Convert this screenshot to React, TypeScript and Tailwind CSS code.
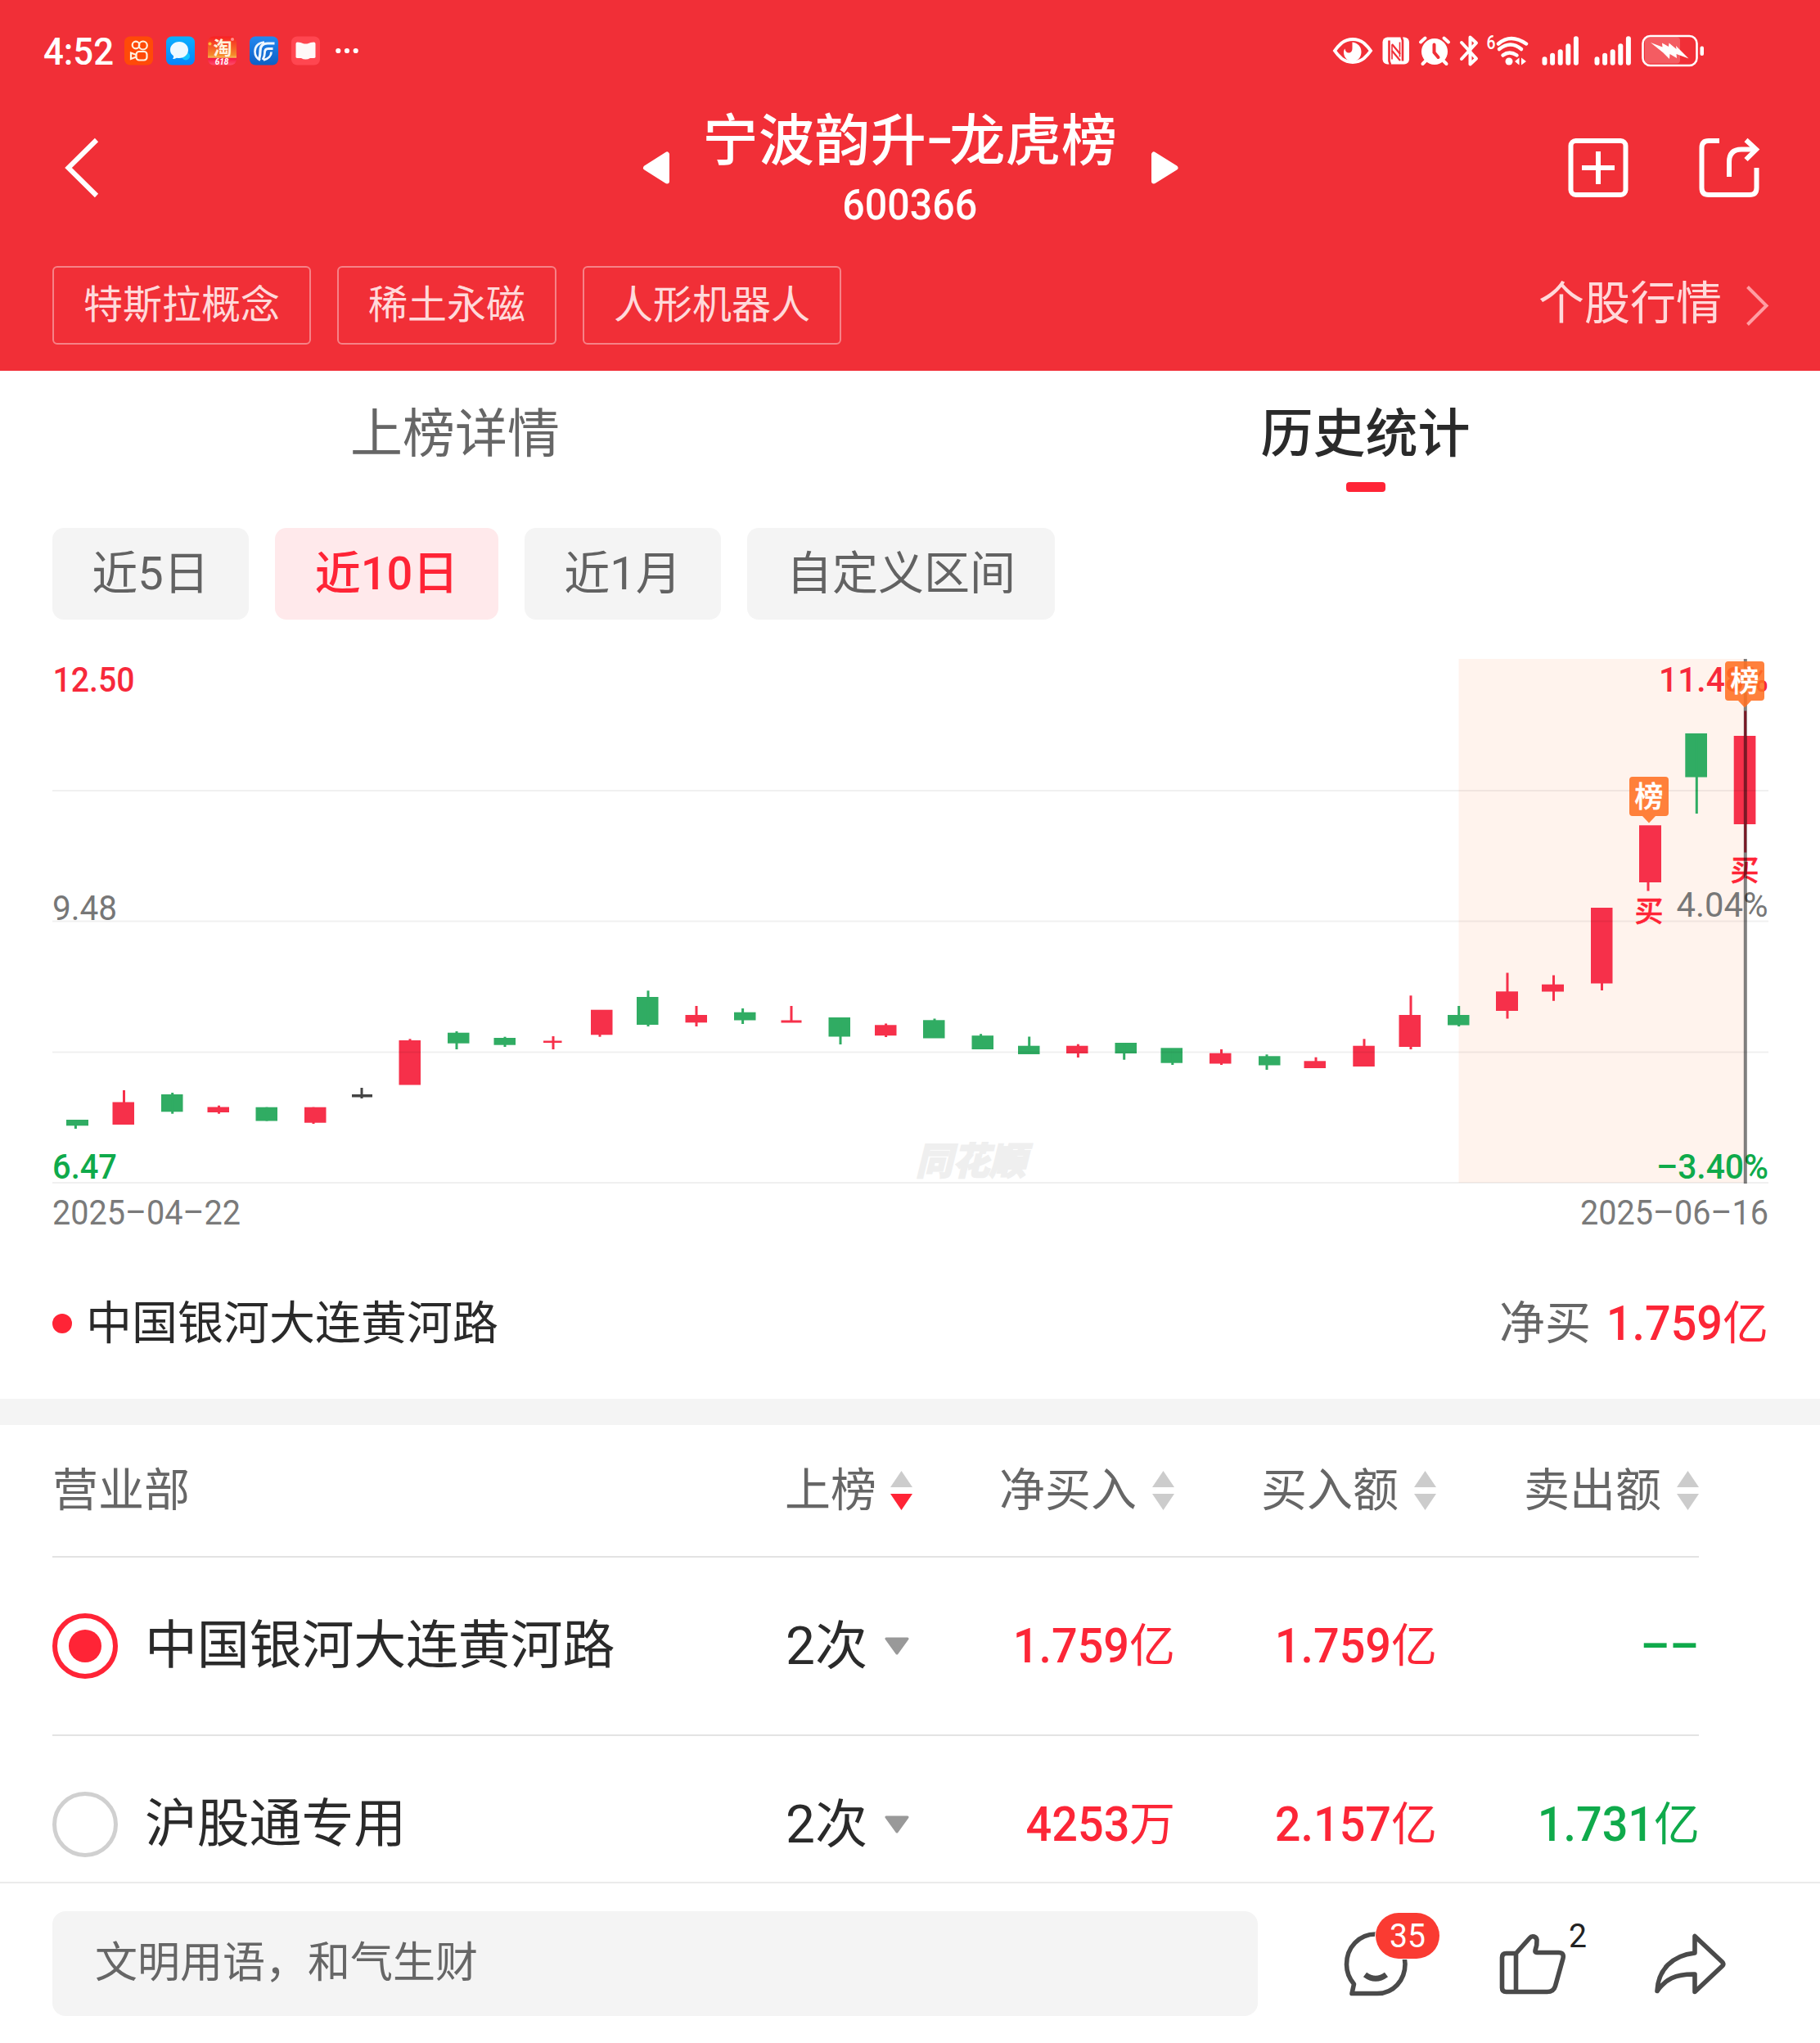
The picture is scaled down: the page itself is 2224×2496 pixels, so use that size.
import React from 'react';

const RED = '#f6304a';
const GREEN = '#30ac63';
const DARK = '#444444';

type Candle = {
  color: string;
  x: number;
  w: number;
  top: number;
  bottom: number;
  wick: number;
  high: number;
  low: number;
};

const c = (color: string, x: number, w: number, top: number, bottom: number, wick: number, high: number, low: number): Candle => ({
  color, x, w, top, bottom, wick, high, low,
});

const candles: Candle[] = [
  c(GREEN, 81, 27, 1368, 1375.3, 92.4, 1368, 1379),
  c(RED, 137.5, 26.5, 1346.5, 1374, 151.5, 1332, 1374),
  c(GREEN, 197, 26.5, 1337, 1358.3, 210.7, 1335, 1360.7),
  c(RED, 253.5, 26.5, 1352.5, 1359, 267.5, 1350.7, 1360.7),
  c(GREEN, 312.5, 26.5, 1352.7, 1369.5, 326, 1352.7, 1369.5),
  c(RED, 372, 26.5, 1352.7, 1371.7, 383, 1352.7, 1373),
  c(DARK, 430, 25, 1337, 1340.5, 442, 1329, 1342),
  c(RED, 487.5, 26.5, 1271, 1325.5, 501, 1269.3, 1325),
  c(GREEN, 547, 26.5, 1261.7, 1274.7, 558, 1260, 1282),
  c(GREEN, 603.5, 26.5, 1268, 1276.7, 617, 1266.7, 1279),
  c(RED, 664, 22.5, 1271.5, 1274, 676, 1266, 1282),
  c(RED, 722, 26.5, 1233.7, 1264.3, 733, 1234, 1266.7),
  c(GREEN, 778, 26.5, 1218, 1252, 792, 1210.3, 1254),
  c(RED, 837.5, 26.5, 1240, 1249.3, 851, 1229, 1254),
  c(GREEN, 897, 26.5, 1236.7, 1246.5, 907.6, 1232, 1251),
  c(RED, 954.5, 25, 1246.5, 1249.5, 967, 1229, 1249),
  c(GREEN, 1012.5, 26.5, 1243, 1266.5, 1027, 1243, 1276),
  c(RED, 1069, 26.5, 1252.3, 1265.2, 1082.6, 1250.5, 1267),
  c(GREEN, 1128, 26.5, 1246.3, 1268.5, 1142, 1244.5, 1268),
  c(GREEN, 1187.5, 26.5, 1265.2, 1282, 1198.6, 1263.2, 1282),
  c(GREEN, 1244, 26.5, 1277.7, 1288, 1257.7, 1266.5, 1288),
  c(RED, 1303, 26.5, 1277.7, 1287, 1317.4, 1275.7, 1292),
  c(GREEN, 1362.5, 26.5, 1274, 1287, 1373.7, 1274, 1294.7),
  c(GREEN, 1418.5, 26.5, 1280.3, 1298.7, 1432.8, 1281, 1301),
  c(RED, 1478, 26.5, 1286.7, 1299.5, 1492.5, 1282, 1301),
  c(GREEN, 1538, 26.5, 1290.3, 1301.5, 1548, 1288.3, 1307),
  c(RED, 1593.5, 26.5, 1296.3, 1305, 1608, 1291.7, 1305),
  c(RED, 1653.3, 26.5, 1277.7, 1303, 1667, 1269.3, 1303),
  c(RED, 1709.5, 26.5, 1240, 1279, 1724, 1216.3, 1282),
  c(GREEN, 1769, 26.5, 1240, 1252.5, 1782.7, 1229, 1254),
  c(RED, 1828, 27, 1211.3, 1235, 1842, 1188.5, 1244.5),
  c(RED, 1884, 27, 1202.7, 1211.5, 1898.5, 1191.5, 1222.8),
  c(RED, 1944, 26.5, 1109, 1201.5, 1957.5, 1110, 1210),
  c(RED, 2003, 27, 1008.3, 1078, 2014, 1010, 1088.5),
  c(GREEN, 2059.3, 26.7, 896, 949.5, 2073.3, 897, 994),
  c(RED, 2118.7, 26.7, 899, 1007, 2132.7, 868.5, 1041.5),
];

const gridLines = [966, 1125.5, 1285.5, 1445];

function ListBadge({ x, y }: { x: number; y: number }) {
  return (
    <g>
      <path
        d={`M${x + 4} ${y}h40a4 4 0 0 1 4 4v40a4 4 0 0 1 -4 4h-12l-8 8.5l-8 -8.5h-12a4 4 0 0 1 -4 -4v-40a4 4 0 0 1 4 -4z`}
        fill="#ff6f22"
        fillOpacity="0.88"
      />
      <text x={x + 24} y={y + 36.5} textAnchor="middle" fontSize="35" fontWeight="500" fill="#fff" stroke="#fff" strokeWidth="0.5">榜</text>
    </g>
  );
}

function Chart() {
  return (
    <svg
      className="block h-[752px] w-full [font-family:Roboto,'Noto_Sans_CJK_SC',sans-serif]"
      viewBox="0 789 2224 752"
    >
      <rect x="1782.5" y="805" width="349" height="640" fill="#fff3ed" />
      <text
        x="1119"
        y="1435"
        fontSize="46"
        fontWeight="900"
        fill="#efefef"
        stroke="#efefef"
        strokeWidth="1.5"
        fontStyle="italic"
        textLength="135"
        lengthAdjust="spacingAndGlyphs"
      >
        同花顺
      </text>
      {candles.map((k) => (
        <g key={k.x} fill={k.color}>
          <rect x={k.x} y={k.top} width={k.w} height={k.bottom - k.top} />
          <rect x={k.wick - 1.5} y={k.high} width="3" height={k.low - k.high} />
        </g>
      ))}
      {gridLines.map((y) => (
        <rect key={y} x="64" y={y - 1} width="2097" height="2" fill="#000" fillOpacity="0.06" />
      ))}
      <g fontSize="43" fontWeight="500">
        <text x="64.5" y="844.5" fill="#f7293b" textLength="100" lengthAdjust="spacingAndGlyphs">12.50</text>
        <text x="64" y="1124" fill="#777" fontWeight="400" textLength="79" lengthAdjust="spacingAndGlyphs">9.48</text>
        <text x="64" y="1440" fill="#0faa4b" textLength="79" lengthAdjust="spacingAndGlyphs">6.47</text>
        <text x="2027" y="844.5" fill="#f7293b" textLength="134" lengthAdjust="spacingAndGlyphs">11.48%</text>
        <text x="2048.5" y="1120" fill="#777" fontWeight="400" textLength="112" lengthAdjust="spacingAndGlyphs">4.04%</text>
        <text x="2024" y="1440" fill="#0faa4b" textLength="137" lengthAdjust="spacingAndGlyphs">–3.40%</text>
        <text x="64" y="1496" fill="#7a7a7a" fontWeight="400" textLength="230" lengthAdjust="spacingAndGlyphs">2025–04–22</text>
        <text x="1931" y="1496" fill="#7a7a7a" fontWeight="400" textLength="230" lengthAdjust="spacingAndGlyphs">2025–06–16</text>
      </g>
      <g fontSize="35" fontWeight="500" fill="#ff2436" stroke="#ff2436" strokeWidth="0.5" textAnchor="middle">
        <text x="2015" y="1125.5">买</text>
        <text x="2132" y="1075.5">买</text>
      </g>
      <rect x="2130.8" y="805" width="4" height="641" fill="#000" fillOpacity="0.5" />
      <ListBadge x={1991} y={949} />
      <ListBadge x={2108} y={808} />
    </svg>
  );
}

function StatusLeft() {
  return (
    <div className="flex items-center">
      <span className="w-[99px] pt-0.5 text-[47px] leading-none font-medium">
        <span className="inline-block origin-left scale-x-[0.93] whitespace-nowrap">4:52</span>
      </span>
      <svg className="h-[36px] w-[290px]" viewBox="152 43.5 290 36">
        <defs>
          <linearGradient id="blueA" x1="0" y1="0" x2="0" y2="1"><stop offset="0" stopColor="#0bb0ff" /><stop offset="1" stopColor="#0584fb" /></linearGradient>
          <linearGradient id="blueB" x1="0" y1="0" x2="0" y2="1"><stop offset="0" stopColor="#2388f0" /><stop offset="1" stopColor="#0e5fc4" /></linearGradient>
          <linearGradient id="warm" x1="0" y1="0" x2="0" y2="1"><stop offset="0" stopColor="#f81f23" /><stop offset="0.65" stopColor="#f58a2a" /><stop offset="0.74" stopColor="#f9b757" /><stop offset="0.75" stopColor="#f5153f" /><stop offset="1" stopColor="#ff4d6d" /></linearGradient>
        </defs>
        <rect x="152" y="44" width="35" height="35" rx="7" fill="#ff4a08" />
        <g fill="none" stroke="#fff0e0" strokeWidth="2.2">
          <circle cx="166" cy="54.5" r="4.3" />
          <circle cx="174.8" cy="55" r="5" />
          <rect x="166.5" y="62.5" width="13" height="10.5" rx="3.5" />
          <path d="M166.500 66.500l-6.500 -2.500v7.500l6.500 -2.500" />
        </g>
        <rect x="203" y="44" width="35" height="35" rx="7" fill="url(#blueA)" />
        <circle cx="227" cy="68" r="5" fill="#15c4ff" />
        <path d="M219 50.500c6.500 0 11 4.500 11 10s-4.500 10 -11 10c-1 0 -2 0 -3 -.3c-1.500 .9 -3 1.200 -5 1.200c1 -1.200 1.300 -2.500 1 -3.600c-2.500 -1.700 -4 -4.300 -4 -7.300c0 -5.500 4.500 -10 11 -10z" fill="#eef9ff" />
        <rect x="254" y="44" width="35" height="35" rx="7" fill="url(#warm)" />
        <circle cx="256.500" cy="53" r="2" fill="#ffb53a" /><circle cx="284" cy="47.500" r="2" fill="#ff8f8f" />
        <text x="272" y="66" fontSize="23" fontWeight="700" textAnchor="middle" fill="#fff2dc">淘</text>
        <text x="271" y="78" fontSize="10" fontWeight="700" fontStyle="italic" textAnchor="middle" fill="#fff">618</text>
        <rect x="305" y="44" width="35" height="35" rx="7" fill="url(#blueB)" />
        <g fill="none" stroke="#eef6ff">
          <path d="M323 51c-7 .5 -11.500 5 -11.500 11.500c0 5 2.500 8.500 6.500 10.500" strokeWidth="2.600" />
          <path d="M335.500 52.500h-8.500c-6 0 -9 3 -9 9.500c0 4 -.5 7 -1.500 10" strokeWidth="3.200" />
          <path d="M333.500 59h-6c-3 0 -4 1.500 -4 5s-1 6 -2.500 8.500M331.500 63c0 4.500 -3.500 8.500 -9.500 9.800" strokeWidth="2.800" />
        </g>
        <rect x="356" y="44" width="35" height="35" rx="7" fill="#ff4650" />
        <path d="M363.500 51c3 0 5 .8 6.500 1.500q3.500 1 7 0c1.500 -.7 3.500 -1.500 6.500 -1.500q2 0 2 2v16.500q-.5 1 -2 1h-4.500q-2.500 1.500 -5.500 1.500t-5.500 -1.500h-4.500q-1.500 0 -2 -1v-16.500q0 -2 2 -2z" fill="#fff8f8" />
        <circle cx="413.300" cy="61.500" r="3.100" fill="#fff" />
        <circle cx="424" cy="61.500" r="3.100" fill="#fff" />
        <circle cx="434.700" cy="61.500" r="3.100" fill="#fff" />
      </svg>
    </div>
  );
}

function Signal({ x }: { x: number }) {
  return (
    <g fill="#fff">
      {[10.500, 15, 19.500, 26.500, 35.500].map((h, i) => (
        <rect key={h} x={x + i * 9.600} y={79.300 - h} width="6" height={h} rx="3" />
      ))}
    </g>
  );
}

function StatusRight() {
  return (
    <svg className="h-[44px] w-[456px]" viewBox="1628 39.500 456 44">
      <path d="M1631 61.500q3 -4.500 8.500 -9.500q6 -4.500 13.500 -4.500t13.500 4.500q5.500 5 8.500 9.500q-3 4.500 -8.500 9.500q-6 4.500 -13.500 4.500t-13.500 -4.500q-5.500 -5 -8.500 -9.500z" fill="none" stroke="#fff" strokeWidth="4" />
      <path d="M1652.500 51c6.500 1 11 5 11 12c0 6.500 -4.500 11.500 -10.500 11.500s-11 -4.500 -11 -11c0 -2 .5 -3.500 1.500 -4.500c.5 3.500 2 5 4.500 5c3.500 0 4.500 -2.500 4.500 -6c0 -2.500 0 -4.500 0 -7z" fill="#fff" />
      <rect x="1689.500" y="45" width="32.500" height="33" rx="6" fill="#fff" />
      <path d="M1699 78.500L1697.500 74V49" fill="none" stroke="#f02f37" strokeWidth="2.600" />
      <path d="M1712.500 44.500L1714 49V74" fill="none" stroke="#f02f37" strokeWidth="2.600" />
      <path d="M1701 54V72M1710.500 51V69" fill="none" stroke="#f02f37" strokeWidth="1.600" />
      <path d="M1701 53.500L1711 65.500M1701 61.500L1711 73.500" fill="none" stroke="#f02f37" strokeWidth="2.200" />
      <circle cx="1753" cy="62.500" r="16" fill="#fff" />
      <path d="M1736 51l5.500 -5M1770 51l-5.500 -5M1742 74l-3.500 3.500M1764 74l3.500 3.500" stroke="#fff" strokeWidth="4" strokeLinecap="round" />
      <path d="M1752.500 54v9.500l5 6" fill="none" stroke="#f02f37" strokeWidth="4" strokeLinecap="round" />
      <path d="M1786 51.500l18 19.500l-7.500 7v-33l7.500 7l-18 19.500" fill="none" stroke="#fff" strokeWidth="4" strokeLinejoin="round" strokeLinecap="round" />
      <text x="1816.500" y="59.500" fontSize="24" fontWeight="500" fill="#fff" textLength="11" lengthAdjust="spacingAndGlyphs">6</text>
      <g fill="none" stroke="#fff" strokeWidth="4.500" strokeLinecap="round">
        <path d="M1831 53q15 -13 34 0" />
        <path d="M1832 59.500q14 -11 27 0" />
        <path d="M1836.500 67q8 -6 17 0" />
      </g>
      <circle cx="1844" cy="74.500" r="4.500" fill="#fff" />
      <path d="M1856.500 70v9l-5.500 -4.500zM1859 70v9l6 -4.500z" fill="#fff" />
      <Signal x={1884.500} />
      <Signal x={1948.500} />
      <rect x="2010" y="45" width="43" height="32" rx="4" fill="#fff" fillOpacity="0.22" />
      <rect x="2007.500" y="43.500" width="66" height="36" rx="9" fill="none" stroke="#fff" strokeWidth="2.600" />
      <rect x="2077.500" y="56" width="4.500" height="11.500" rx="2" fill="#fff" />
      <path d="M2017 51.500l14.500 5.500l-.5 -5l8 4.500l.5 -4.500l9 7.500l-.5 -4l15.500 15.500l-15 -5.500l.5 5l-8.500 -5l-.5 6l-7.500 -7.500z" fill="#fff" />
    </svg>
  );
}

const tags = ['特斯拉概念', '稀土永磁', '人形机器人'];

function Header() {
  return (
    <header className="h-[453px] bg-[#f12f37] text-white">
      <div className="flex h-[123px] items-center justify-between pr-[140px] pl-[53px]">
        <StatusLeft />
        <StatusRight />
      </div>
      <div className="grid h-[164px] grid-cols-[1fr_auto_1fr] items-center">
        <svg className="ml-[76px] h-[80px] w-[50px]" viewBox="76 165 50 80">
          <path d="M118 171L83.500 205L118 239" fill="none" stroke="#fff" strokeWidth="6" />
        </svg>
        <div className="flex items-center">
          <svg className="h-[42px] w-[34px]" viewBox="784 184 34 42">
            <path d="M789 205L815 188.500V221.500z" fill="#fff" stroke="#fff" strokeWidth="6" strokeLinejoin="round" />
          </svg>
          <div className="flex w-[588px] flex-col items-center gap-[10px] pt-[5px]">
            <h1 className="text-[68px] leading-[76px] font-medium tracking-[0.4px] whitespace-nowrap">
              宁波韵升<span className="inline-block w-[28px] scale-x-75 text-center"><span className="-ml-[5px]">–</span></span>龙虎榜
            </h1>
            <span className="inline-block scale-x-[0.93] text-[52px] leading-[60px] font-medium">600366</span>
          </div>
          <svg className="h-[42px] w-[34px]" viewBox="1406 184 34 42">
            <path d="M1436.500 205L1410 188.500V221.500z" fill="#fff" stroke="#fff" strokeWidth="6" strokeLinejoin="round" />
          </svg>
        </div>
        <div className="flex justify-end gap-[84px] pr-[72px]">
          <svg className="h-[76px] w-[76px]" viewBox="1915 167 76 76">
            <rect x="1919.500" y="172" width="67" height="66" rx="6" fill="none" stroke="#fff" strokeWidth="6" />
            <path d="M1953 185v40M1933 205h40" stroke="#fff" strokeWidth="6" />
          </svg>
          <svg className="h-[76px] w-[77px]" viewBox="2075 167 77 76">
            <path d="M2101 172h-13q-8.500 0 -8.500 8.500v49q0 8.500 8.500 8.500h50q8.500 0 8.500 -8.500v-24.500" fill="none" stroke="#fff" strokeWidth="6" />
            <path d="M2113 216v-18q0 -15.500 15 -15.500h18" fill="none" stroke="#fff" strokeWidth="6" />
            <path d="M2133.500 171l12.500 11.500l-12.500 12.500" fill="none" stroke="#fff" strokeWidth="6" />
          </svg>
        </div>
      </div>
      <div className="mt-[38px] flex items-center justify-between pr-[60px] pl-[64px]">
        <div className="flex gap-8">
          {tags.map((t) => (
            <span key={t} className="flex h-[96px] items-center rounded-md border-2 border-white/40 px-9 pb-px text-[48px] text-[#ffd9da]">{t}</span>
          ))}
        </div>
        <div className="flex items-center gap-[28px] text-[56px] leading-none text-[#ffd9da]">
          <span className="-mt-1">个股行情</span>
          <svg className="h-[52px] w-[32px]" viewBox="2132 347 32 52">
            <path d="M2135.500 350.500L2158.500 373.500L2135.500 396.500" fill="none" stroke="#ff9ea3" strokeWidth="4" />
          </svg>
        </div>
      </div>
    </header>
  );
}

function Tabs() {
  return (
    <nav className="grid h-[192px] grid-cols-2 pt-[38px] text-center text-[64px] leading-[80px]">
      <div className="text-[#666]">上榜详情</div>
      <div className="flex flex-col items-center pl-px font-medium text-[#2a2a2a]">
        历史统计
        <span className="mt-[18px] h-3 w-12 rounded bg-[#ff2436]" />
      </div>
    </nav>
  );
}

const ranges = [
  { label: '近5日', width: 'w-[240px]' },
  { label: '近10日', width: 'w-[273px]', on: true },
  { label: '近1月', width: 'w-[240px]' },
  { label: '自定义区间', width: 'w-[376px]' },
];

function Ranges() {
  return (
    <div className="mb-8 flex h-[112px] gap-8 px-16 text-[56px]">
      {ranges.map((r) => (
        <button
          key={r.label}
          className={`${r.width} flex items-center justify-center rounded-[14px] ${
            r.on ? 'bg-[#ffe9eb] font-medium text-[#ff2436]' : 'bg-[#f4f4f4] text-[#626262]'
          }`}
        >
          {r.label}
        </button>
      ))}
    </div>
  );
}

function Sort({ active = false }: { active?: boolean }) {
  return (
    <svg className="h-[48px] w-[27px]" viewBox="0 0 27 48">
      <path d="M13.500 0L27 20H0z" fill="#cccccc" />
      <path d="M13.500 48L27 28H0z" fill={active ? '#ff2436' : '#cccccc'} />
    </svg>
  );
}

function Amount({ num, unit, green = false }: { num: string; unit?: string; green?: boolean }) {
  return (
    <span className={green ? 'flex items-center justify-end text-[#0faa4b]' : 'flex items-center justify-end text-[#fc2637]'}>
      <span className="inline-block origin-right scale-x-[0.93] text-[60px] font-medium">{num}</span>
      {unit && <span className="-mr-px text-[56px]">{unit}</span>}
    </span>
  );
}

const rows = [
  { name: '中国银河大连黄河路', on: true, net: ['1.759', '亿'], buy: ['1.759', '亿'], sell: ['––', ''] },
  { name: '沪股通专用', on: false, net: ['4253', '万'], buy: ['2.157', '亿'], sell: ['1.731', '亿'] },
];

const cols = 'grid grid-cols-[895px_156px_320px_320px_321px] items-center';

function Table() {
  return (
    <section className="h-[558px] w-[2076px] overflow-hidden pl-16">
      <div className={`${cols} h-[162px] border-b-2 border-[#e3e3e3] text-[56px] text-[#666]`}>
        <span>营业部</span>
        <span className="flex items-center justify-between"><span>上榜</span><Sort active /></span>
        {['净买入', '买入额', '卖出额'].map((t) => (
          <span key={t} className="flex items-center justify-end gap-[19px]"><span>{t}</span><Sort /></span>
        ))}
      </div>
      {rows.map((r) => (
        <div key={r.name} className={`${cols} h-[218px] border-b-2 border-[#e3e3e3]`}>
          <span className="flex items-center gap-[33px] text-[64px] tracking-[-0.2px] text-[#2a2a2a]">
            {r.on ? (
              <span className="flex size-20 items-center justify-center rounded-full border-6 border-[#ff2436]">
                <span className="size-10 rounded-full bg-[#ff2436]" />
              </span>
            ) : (
              <span className="size-20 rounded-full border-5 border-[#d0d0d0]" />
            )}
            <span>{r.name}</span>
          </span>
          <span className="flex items-center justify-between pr-[3px] text-[64px] text-[#2a2a2a]">
            <span className="pt-0.5 pl-px">2次</span>
            <svg className="h-[22px] w-[32px]" viewBox="0 0 32 22">
              <path d="M3 2H29L16 20z" fill="#999" stroke="#999" strokeWidth="3" strokeLinejoin="round" />
            </svg>
          </span>
          <Amount num={r.net[0]} unit={r.net[1]} />
          <Amount num={r.buy[0]} unit={r.buy[1]} />
          <Amount num={r.sell[0]} unit={r.sell[1]} green />
        </div>
      ))}
    </section>
  );
}

function BottomBar() {
  return (
    <footer className="flex h-[197px] items-start border-t-2 border-[#ebebeb] pt-[34px] pl-16">
      <div className="flex h-[128px] w-[1473px] items-center rounded-2xl bg-[#f4f4f4] pl-[52px] text-[52px] text-[#666]">文明用语，和气生财</div>
      <svg className="ml-[91px] h-[128px] w-[500px] [font-family:Roboto,sans-serif]" viewBox="1628 2335 500 128">
        <g fill="none" stroke="#4a4a4a" strokeWidth="5.600" strokeLinejoin="round">
          <path d="M1681 2363c-20 0 -35.500 16 -35.500 37c0 9.500 3.500 17.500 9 24l-2.500 11.500h31c20 0 34 -16.500 34 -36c0 -21 -15 -36.500 -36 -36.500z" />
          <path d="M1668 2412.500q13 9.500 26 0" strokeWidth="7" />
          <path d="M1852.500 2386.500h-12q-5 0 -5 5v37q0 5 5 5h50q8 0 10 -7l9.500 -34q1.500 -7 -5.500 -7h-26.500q-2.500 0 -2 -2.500q2.500 -7 2 -13q-.5 -3 -3.500 -4t-5.500 2zM1852.500 2386.500v47" />
          <path d="M2071 2365.500v20.500c-28 3 -45 21 -46 46.500c10 -14 22 -21 46 -20.500v21.500l33.500 -31.500q2.500 -2.500 0 -5z" />
        </g>
        <rect x="1680" y="2336" width="80" height="58" rx="29" fill="#fff" />
        <rect x="1681" y="2337" width="78" height="56" rx="28" fill="#fa3b32" />
        <text x="1720" y="2378.500" fontSize="41" fill="#fff" textAnchor="middle" textLength="44" lengthAdjust="spacingAndGlyphs">35</text>
        <text x="1928" y="2378.500" fontSize="41" fill="#222" textAnchor="middle" textLength="22" lengthAdjust="spacingAndGlyphs">2</text>
      </svg>
    </footer>
  );
}

export default function App() {
  return (
    <div className="h-[2496px] w-[2224px] overflow-hidden bg-white [font-family:Roboto,'Noto_Sans_CJK_SC',sans-serif]">
      <Header />
      <Tabs />
      <Ranges />
      <Chart />
      <div className="flex h-[168px] items-center justify-between px-16 pb-[16px] text-[56px]">
        <div className="flex items-center gap-[17px] text-[#2a2a2a]">
          <span className="size-6 rounded-full bg-[#ff2436]" />
          <span>中国银河大连黄河路</span>
        </div>
        <div className="flex items-center gap-[8px] text-[#666]">
          <span>净买</span>
          <Amount num="1.759" unit="亿" />
        </div>
      </div>
      <div className="h-8 bg-[#f4f4f4]" />
      <Table />
      <BottomBar />
    </div>
  );
}
